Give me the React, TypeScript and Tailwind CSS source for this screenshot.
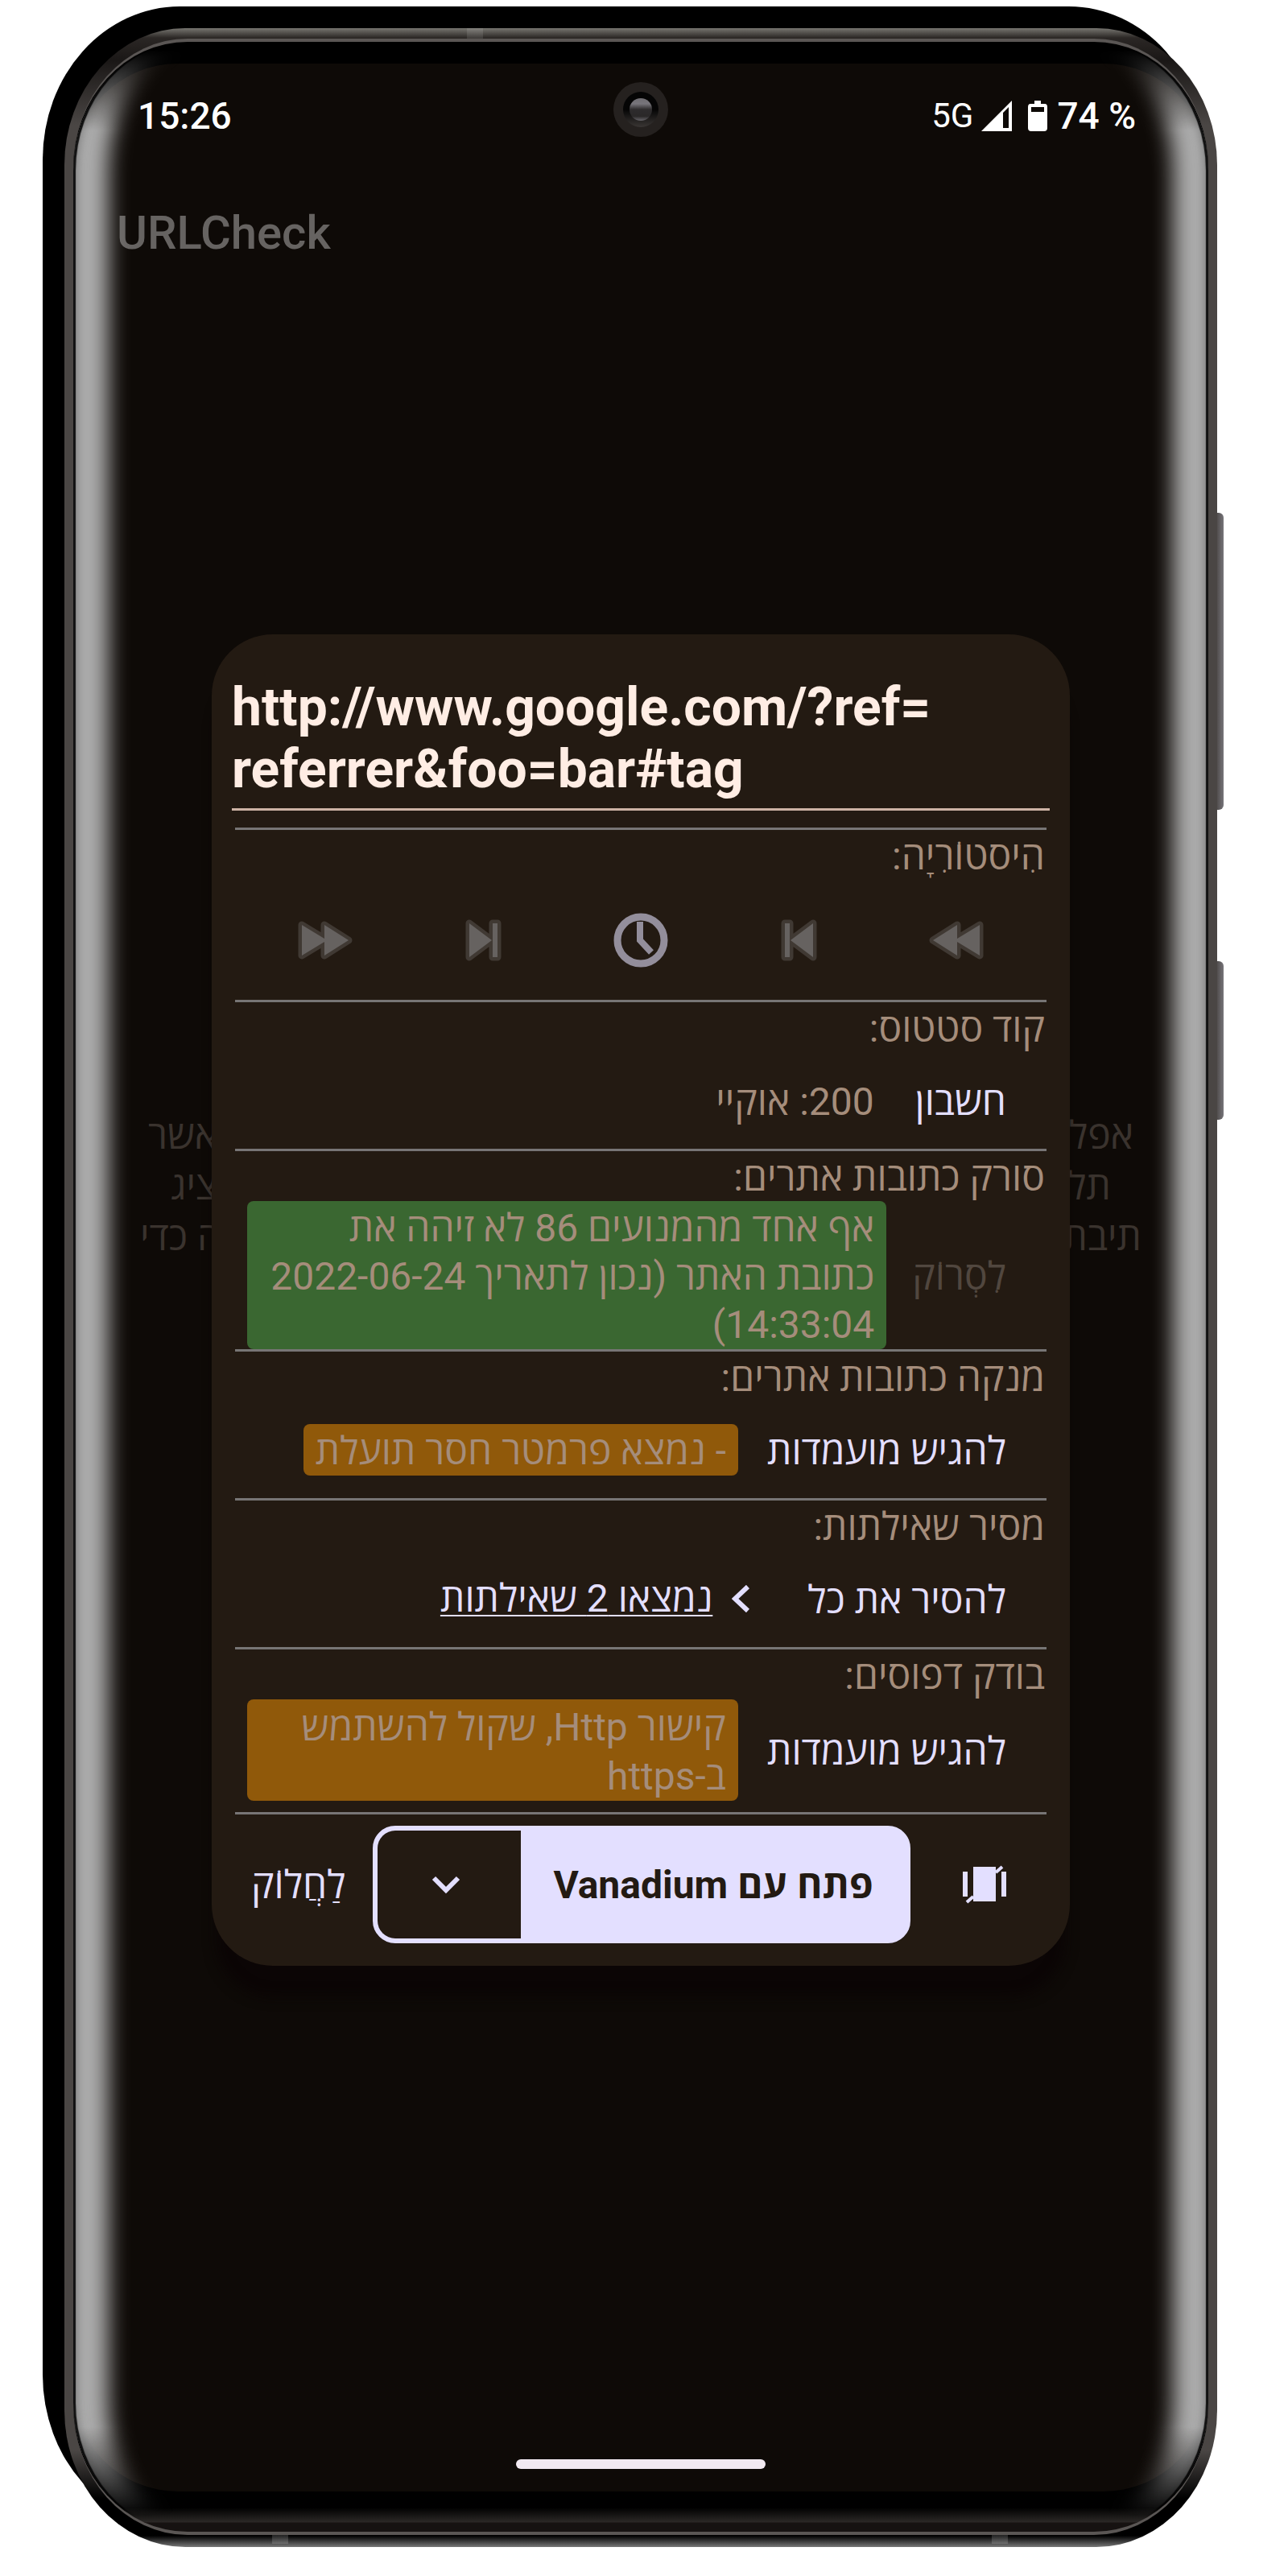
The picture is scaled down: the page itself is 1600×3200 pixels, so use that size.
import type { ReactNode } from 'react';

function Label({ children }: { children: ReactNode }) {
  return <h2 className="h-[62px] px-[2px] leading-[66px]">{children}</h2>;
}

function Module({ title, children }: { title: string; children: ReactNode }) {
  return (
    <section className="border-t-[3px] border-[#777575]">
      <Label>{title}</Label>
      {children}
    </section>
  );
}

function ActionButton({ children, disabled = false }: { children: ReactNode; disabled?: boolean }) {
  return (
    <button
      type="button"
      disabled={disabled}
      className="shrink-0 ps-[50px] pe-9 pt-1 leading-[62px] text-[#e3dfff] disabled:pe-8 disabled:text-[#51473f]"
    >
      {children}
    </button>
  );
}

const mediaShapes = {
  rewind: 'M40 9 L10 28 L40 47 V30 L68 47 V9 L40 26 Z',
  previous: 'M11 7 H17 V49 H11 Z M46 7 V49 L18 28 Z',
  next: 'M40 7 H46 V49 H40 Z M11 7 V49 L39 28 Z',
  forward: 'M38 9 L68 28 L38 47 V30 L10 47 V9 L38 26 Z',
};

function MediaButton({ kind, label, width }: { kind: keyof typeof mediaShapes; label: string; width: number }) {
  return (
    <button type="button" disabled aria-label={label} className="flex flex-1 items-center justify-center">
      <svg width={width} height="56" viewBox={`0 0 ${width} 56`} strokeLinejoin="round">
        <path d={mediaShapes[kind]} fill="none" stroke="#403933" strokeWidth="9" />
        <path d={mediaShapes[kind]} fill="#666260" />
      </svg>
    </button>
  );
}

function BackgroundLine({ start, end, className }: { start: string; end: string; className: string }) {
  return (
    <span className={`mx-auto flex justify-between ${className}`}>
      <span>{start}</span>
      <span>{end}</span>
    </span>
  );
}

function StatusBar() {
  return (
    <header className="flex items-center justify-between pt-[33px] pr-[90px] pl-[80px] text-[46px] leading-[64px] font-medium text-white">
      <time>15:26</time>
      <div className="flex items-center">
        <span className="text-[42px] font-normal">5G</span>
        <svg className="ml-[10px]" width="38" height="38" viewBox="0 0 38 38" fill="#fff">
          <path fillRule="evenodd" d="M38 0 V38 H0 Z M27 15 V34 H34 V8 Z" />
        </svg>
        <svg className="ml-5" width="24" height="38" viewBox="0 0 24 38" fill="#fff">
          <path fillRule="evenodd" d="M8 0 H16 V4 H21 Q24 4 24 8 V34 Q24 38 20 38 H4 Q0 38 0 34 V8 Q0 4 3 4 H8 Z M4 8 V14 H20 V8 Z" />
        </svg>
        <span className="ml-3">74 %</span>
      </div>
    </header>
  );
}

function Dialog() {
  return (
    <div
      role="dialog"
      aria-label="URLCheck"
      dir="rtl"
      className="w-full rounded-[76px] bg-[#231a12] px-[29px] pb-[28px] text-[48px] text-[#a58d7b] shadow-[0_44px_16px_-6px_#0b0505]"
    >
      <div className="-mx-1 pt-[52px]">
        <textarea
          dir="ltr"
          rows={2}
          aria-label="URL"
          spellCheck={false}
          defaultValue={'http://www.google.com/?ref=\nreferrer&foo=bar#tag'}
          className="mb-[21px] block h-[167px] w-full resize-none overflow-hidden border-b-[3px] border-[#cdb3a5] bg-transparent text-[66px] leading-[77px] font-bold text-[#ffede4] outline-none"
        />
      </div>

      <Module title="הִיסטוֹרִיָה:">
        <div className="flex h-[149px] px-[14px]">
          <MediaButton kind="rewind" label="ראשון" width={78} />
          <MediaButton kind="previous" label="הקודם" width={57} />
          <button type="button" aria-label="היסטוריה" className="flex flex-1 items-center justify-center">
            <svg width="68" height="68" viewBox="0 0 68 68" fill="none" stroke="#938e9b">
              <circle cx="34" cy="34" r="29" strokeWidth="9" />
              <path d="M33 11 V34 L47 49" strokeWidth="8" />
            </svg>
          </button>
          <MediaButton kind="next" label="הבא" width={57} />
          <MediaButton kind="forward" label="אחרון" width={78} />
        </div>
      </Module>

      <Module title="קוד סטטוס:">
        <div className="flex h-[120px] items-center">
          <ActionButton>חשבון</ActionButton>
          <p className="px-[15px] pt-1 leading-[62px]">200: אוקיי</p>
        </div>
      </Module>

      <Module title="סורק כתובות אתרים:">
        <div className="flex items-center pe-[15px]">
          <ActionButton disabled>לִסְרוֹק</ActionButton>
          <p className="flex-1 rounded-[8px] bg-[#3a6731] px-[15px] pt-1 leading-[60px]">
            אף אחד מהמנועים 86 לא זיהה את
            <br />
            כתובת האתר (נכון לתאריך 2022-06-24
            <br />
            14:33:04)
          </p>
        </div>
      </Module>

      <Module title="מנקה כתובות אתרים:">
        <div className="flex h-[120px] items-center">
          <ActionButton>להגיש מועמדות</ActionButton>
          <p className="rounded-[8px] bg-[#90590a] px-[15px] pt-1 leading-[60px]">- נמצא פרמטר חסר תועלת</p>
        </div>
      </Module>

      <Module title="מסיר שאילתות:">
        <div className="flex h-[120px] items-center">
          <ActionButton>להסיר את כל</ActionButton>
          <details className="text-[#e3dfff]">
            <summary className="flex list-none items-center ps-9 leading-[62px]">
              <svg width="22" height="34" viewBox="0 0 22 34" fill="none" stroke="#e3dfff" strokeWidth="6">
                <path d="M20 2 L4 17 L20 32" />
              </svg>
              <a href="#queries" className="ms-6 underline decoration-2 underline-offset-4">
                נמצאו 2 שאילתות
              </a>
            </summary>
          </details>
        </div>
      </Module>

      <Module title="בודק דפוסים:">
        <div className="flex items-center pe-[15px] pb-[14px]">
          <ActionButton>להגיש מועמדות</ActionButton>
          <p className="flex-1 rounded-[8px] bg-[#90590a] px-[15px] pt-1 leading-[61px]">
            קישור Http, שקול להשתמש
            <br />
            ב-https
          </p>
        </div>
      </Module>

      <footer className="flex items-center border-t-[3px] border-[#777575] pt-[14px] text-[#e3dfff]">
        <button type="button" aria-label="לשונית" className="flex h-[146px] flex-1 items-center ps-[50px]">
          <svg width="54" height="48" viewBox="0 0 54 48" fill="#e3dfff">
            <path d="M0 8 H6 V39 H0 Z M48 8 H54 V39 H48 Z M13 2 H41 V45 H13 Z" />
            <path d="M41 9 L49 2 M5 46 L13 39" stroke="#e3dfff" strokeWidth="4" />
          </svg>
        </button>
        <div className="flex h-[146px] rounded-[28px] border-[6px] border-[#e3dfff] bg-[#e3dfff]">
          <button type="button" className="px-10 pt-[2px] font-bold text-[#231a12]">
            פתח עם Vanadium
          </button>
          <button
            type="button"
            aria-label="אפליקציות נוספות"
            className="flex w-[178px] items-center justify-center rounded-l-[22px] bg-[#231a12]"
          >
            <svg className="mr-2" width="36" height="24" viewBox="0 0 36 24" fill="none" stroke="#e3dfff" strokeWidth="6">
              <path d="M3 4 L18 19 L33 4" />
            </svg>
          </button>
        </div>
        <button type="button" className="h-[146px] ps-[34px] pe-5 pt-[2px]">
          לַחֲלוֹק
        </button>
      </footer>
    </div>
  );
}

function Camera() {
  return (
    <svg className="absolute top-[23px] left-1/2 -translate-x-1/2" width="68" height="68" viewBox="0 0 68 68">
      <defs>
        <linearGradient id="lens" x1="0" y1="0" x2="0" y2="1">
          <stop offset="0" stopColor="#6f6d72" />
          <stop offset="0.25" stopColor="#77757b" />
          <stop offset="0.5" stopColor="#2e2c2d" />
          <stop offset="0.8" stopColor="#2a2828" />
          <stop offset="1" stopColor="#67656a" />
        </linearGradient>
        <linearGradient id="lens-ring" x1="0" y1="0" x2="0" y2="1">
          <stop offset="0.5" stopColor="#050505" />
          <stop offset="1" stopColor="#3a3634" />
        </linearGradient>
      </defs>
      <circle cx="34" cy="34" r="34" fill="#25211f" />
      <circle cx="34" cy="34" r="22" fill="url(#lens-ring)" />
      <circle cx="34" cy="34" r="14" fill="url(#lens)" />
    </svg>
  );
}

export default function App() {
  return (
    <div className="flex min-h-screen bg-white pt-[35px] pr-[88px] pb-[36px] pl-[80px] font-['Roboto','Open_Sans',sans-serif]">
      <div className="relative flex flex-1">
        <div className="absolute -top-[27px] right-[14px] bottom-6 -left-[27px] rounded-[170px/190px] bg-black" />
        <div className="absolute top-[602px] -right-[8px] h-[369px] w-3 rounded-r-[6px] bg-linear-to-r from-[#403c3a] to-[#77757a]" />
        <div className="absolute top-[1159px] -right-[8px] h-[197px] w-3 rounded-r-[6px] bg-linear-to-r from-[#403c3a] to-[#77757a]" />

        <div className="relative flex flex-1 overflow-hidden rounded-[150px/170px] bg-[linear-gradient(to_bottom,#777570_0px,#2b2725_12px,#1a1716_40px,#4a4644_120px,#4a4644_calc(100%-120px),#000_calc(100%-60px),#000_calc(100%-14px),#777_100%)] px-[11px] pt-[13px] pb-[15px]">
          <div className="absolute top-0 left-[500px] h-[13px] w-5 bg-white/10" />
          <div className="absolute bottom-1 left-[258px] h-[11px] w-5 bg-white/15" />
          <div className="absolute right-[260px] bottom-1 h-[11px] w-5 bg-white/15" />

          <div className="relative flex flex-1 overflow-hidden rounded-[142px/160px] border-y-4 border-[#5a5654] bg-[linear-gradient(to_top,#161211_11px,#2b2826_12px,#000_30px)] pt-[27px] pb-[50px]">
            <div className="relative grid flex-1 grid-cols-1 rounded-[130px] bg-[#0e0a07]">
              <div className="col-start-1 row-start-1 flex flex-col">
                <StatusBar />
                <h1 className="mt-[77px] ml-[54px] text-[58px] leading-[72px] font-medium text-[#666361]">URLCheck</h1>
                <p dir="rtl" className="flex flex-1 flex-col justify-center pb-[434px] text-[48px] leading-[63px] text-[#3a332e]">
                  <BackgroundLine start="אפל" end="אשר" className="w-[1224px]" />
                  <BackgroundLine start="תל" end="ציג" className="w-[1168px]" />
                  <BackgroundLine start="תיבת" end="ה כדי" className="w-[1244px]" />
                </p>
                <div className="mx-auto mb-[28px] h-3 w-[310px] rounded-full bg-[#f1e9f1]" />
              </div>
              <Camera />
              <div className="relative col-start-1 row-start-1 flex items-center px-[172px] pt-[56px]">
                <Dialog />
              </div>
            </div>
            <div className="pointer-events-none absolute inset-0 rounded-[142px/160px] mask-[linear-gradient(to_bottom,transparent_10px,#000_110px,#000_calc(100%-130px),transparent_calc(100%-20px))] shadow-[inset_3px_0_1px_#111,inset_-3px_0_1px_#111,inset_24px_0_14px_-20px_#777,inset_-24px_0_14px_-20px_#777,inset_78px_0_26px_-34px_#adadad,inset_-78px_0_26px_-34px_#adadad]" />
          </div>
        </div>
      </div>
    </div>
  );
}
